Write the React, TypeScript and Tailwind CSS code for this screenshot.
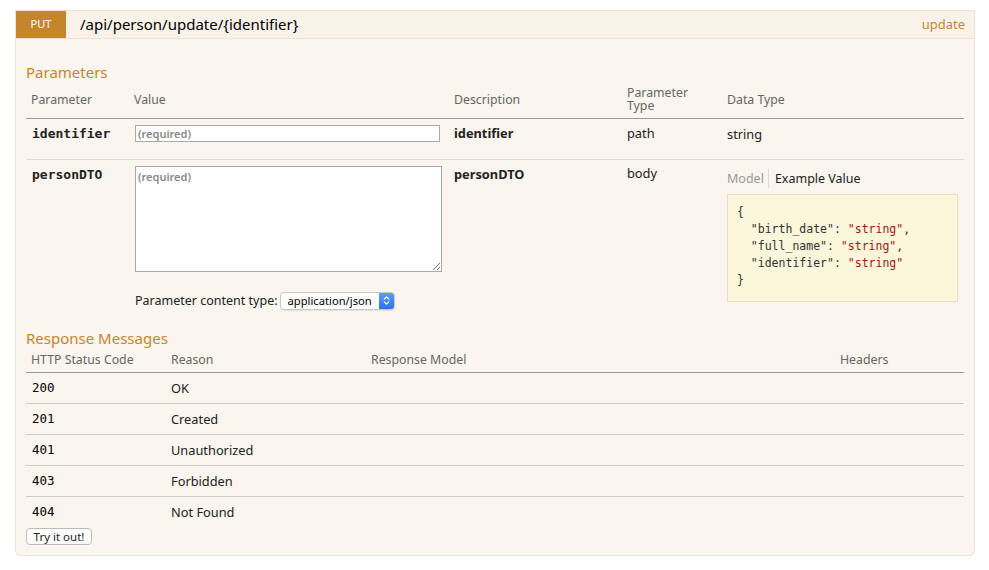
import { ChevronsUpDown } from 'lucide-react'

const RESPONSES = [
  { code: '200', reason: 'OK' },
  { code: '201', reason: 'Created' },
  { code: '401', reason: 'Unauthorized' },
  { code: '403', reason: 'Forbidden' },
  { code: '404', reason: 'Not Found' },
]

const sans = 'font-["Noto_Sans","Open_Sans",sans-serif]'
const mono = 'font-["DejaVu_Sans_Mono","Liberation_Mono",monospace]'

function ExampleValue() {
  return (
    <div className={`mt-[6px] w-[231px] border border-[#e5e0c6] bg-[#fcf6db] px-[9px] pt-[9px] pb-[12px] ${mono} text-[11.5px] leading-[17px] text-[#333] whitespace-pre`}>
      <div>{'{'}</div>
      <div>
        {'  "birth_date": '}<span className="text-[#a31515]">"string"</span>,
      </div>
      <div>
        {'  "full_name": '}<span className="text-[#a31515]">"string"</span>,
      </div>
      <div>
        {'  "identifier": '}<span className="text-[#a31515]">"string"</span>
      </div>
      <div>{'}'}</div>
    </div>
  )
}

export default function App() {
  return (
    <div className={`min-h-[570px] bg-white pl-[15px] pt-[10px] ${sans}`}>
      <div className="w-[960px]">
        {/* Heading */}
        <div className="flex h-[29px] items-stretch border border-[#f0e2d7] bg-[#f9f2e9]">
          <div className="flex w-[50px] items-center justify-center bg-[#c5862b] text-[11px] text-white">
            PUT
          </div>
          <div className="ml-[14px] flex items-center text-[15px] text-black">
            /api/person/update/{'{identifier}'}
          </div>
          <div className="ml-auto mr-[9px] flex items-center text-[13px] text-[#c5862b]">update</div>
        </div>

        {/* Content */}
        <div className="rounded-b-[6px] border border-t-0 border-[#f0e2d7] bg-[#faf5ee] px-[10px] pt-[23px] pb-[10px]">
          <h4 className="h-[20px] text-[15px] leading-[20px] text-[#c5862b]">Parameters</h4>
          <table className="w-[938px] table-fixed border-collapse text-[12.8px]">
            <colgroup>
              <col className="w-[103px]" />
              <col className="w-[320px]" />
              <col className="w-[173px]" />
              <col className="w-[100px]" />
              <col />
            </colgroup>
            <thead>
              <tr className="h-[36px] border-b border-[#999] text-left align-middle text-[12.3px] leading-[12.5px] text-[#666]">
                <th className="pl-[5px] font-normal">Parameter</th>
                <th className="pl-[5px] font-normal">Value</th>
                <th className="pl-[5px] font-normal">Description</th>
                <th className="pl-[5px] font-normal">Parameter<br />Type</th>
                <th className="pl-[5px] font-normal">Data Type</th>
              </tr>
            </thead>
            <tbody className="align-top leading-[17px] text-[#222]">
              <tr className="border-b border-[#ddd]">
                <td className={`pl-[6px] pt-[6px] pb-[17px] ${mono} text-[13px] font-bold`}>identifier</td>
                <td className="pl-[6px] pt-[6px]">
                  <input
                    type="text"
                    placeholder="(required)"
                    className="block h-[17px] w-[305px] border border-[#aaa] bg-white px-[2px] text-[11px] placeholder:font-semibold placeholder:text-[#888] outline-none"
                  />
                </td>
                <td className="pl-[5px] pt-[6px] font-bold">identifier</td>
                <td className="pl-[5px] pt-[6px]">path</td>
                <td className="pl-[5px] pt-[7px]">string</td>
              </tr>
              <tr>
                <td className={`pl-[6px] pt-[6px] ${mono} text-[13px] font-bold`}>personDTO</td>
                <td className="pl-[6px] pt-[6px] pb-[6px]">
                  <textarea
                    placeholder="(required)"
                    className="block h-[106px] w-[307px] border border-[#aaa] bg-white px-[2px] py-[1px] text-[11px] placeholder:font-semibold placeholder:text-[#888] outline-none"
                  />
                  <div className="mt-[20px] flex h-[18px] items-center text-[12.5px] text-[#222]">
                    <span>Parameter content type:</span>
                    <div className="ml-[2px] flex h-[18px] w-[115px] items-stretch overflow-hidden rounded-[4px] border border-[#c8c8c8] bg-white shadow-[0_1px_1px_rgba(0,0,0,0.08)]">
                      <span className="flex-1 pl-[7px] text-[11.2px] leading-[16px] text-black">application/json</span>
                      <span className="flex w-[15px] items-center justify-center bg-gradient-to-b from-[#5c9cf7] to-[#2f73e6]">
                        <ChevronsUpDown className="h-[11px] w-[11px] text-white" strokeWidth={2.5} />
                      </span>
                    </div>
                  </div>
                </td>
                <td className="pl-[5px] pt-[6px] font-bold">personDTO</td>
                <td className="pl-[5px] pt-[5px]">body</td>
                <td className="pl-[5px] pt-[9px]">
                  <div className="flex items-center text-[12.5px] leading-[17px]">
                    <span className="pr-[4px] text-[#999]">Model</span>
                    <span className="h-[19px] border-l border-[#ddd]" />
                    <span className="pl-[6px] text-[#222]">Example Value</span>
                  </div>
                  <ExampleValue />
                </td>
              </tr>
            </tbody>
          </table>

          <h4 className="mt-[12px] h-[20px] text-[15px] leading-[20px] text-[#c5862b]">Response Messages</h4>
          <table className="w-[938px] table-fixed border-collapse text-[12.8px]">
            <colgroup>
              <col className="w-[140px]" />
              <col className="w-[200px]" />
              <col className="w-[469px]" />
              <col />
            </colgroup>
            <thead>
              <tr className="h-[25px] border-b border-[#999] text-left align-middle text-[12.3px] text-[#666]">
                <th className="pl-[5px] font-normal">HTTP Status Code</th>
                <th className="pl-[5px] font-normal">Reason</th>
                <th className="pl-[5px] font-normal">Response Model</th>
                <th className="pl-[5px] font-normal">Headers</th>
              </tr>
            </thead>
            <tbody className="align-top leading-[17px] text-[#222]">
              {RESPONSES.map((r, i) => (
                <tr key={r.code} className={i < RESPONSES.length - 1 ? 'h-[31px] border-b border-[#ccc]' : 'h-[30px]'}>
                  <td className={`pl-[6px] pt-[6px] ${mono} text-[12.5px] font-medium text-black`}>{r.code}</td>
                  <td className="pl-[5px] pt-[7px]">{r.reason}</td>
                  <td />
                  <td />
                </tr>
              ))}
            </tbody>
          </table>
          <button className="mt-[1px] block h-[17px] w-[66px] rounded-[4px] border border-[#bbb] bg-white text-[11.5px] leading-[15px] text-[#222]">
            Try it out!
          </button>
        </div>
      </div>
    </div>
  )
}
